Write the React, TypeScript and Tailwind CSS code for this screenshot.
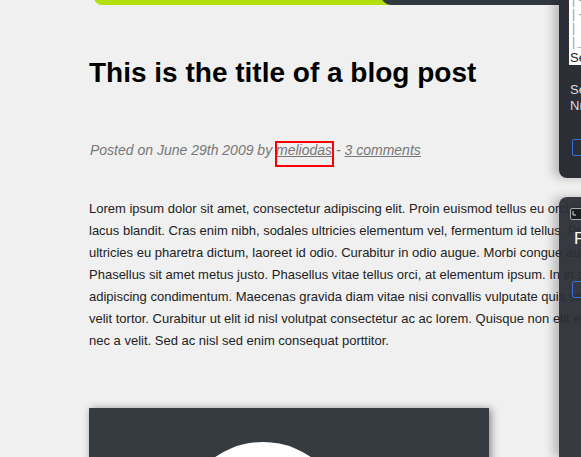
import React from "react";

const lines = [
  "Lorem ipsum dolor sit amet, consectetur adipiscing elit. Proin euismod tellus eu orci imperdiet nec rutrum",
  "lacus blandit. Cras enim nibh, sodales ultricies elementum vel, fermentum id tellus. Proin metus odio,",
  "ultricies eu pharetra dictum, laoreet id odio. Curabitur in odio augue. Morbi congue auctor interdum.",
  "Phasellus sit amet metus justo. Phasellus vitae tellus orci, at elementum ipsum. In in quam eget diam",
  "adipiscing condimentum. Maecenas gravida diam vitae nisi convallis vulputate quis sit amet nibh. Nullam ut",
  "velit tortor. Curabitur ut elit id nisl volutpat consectetur ac ac lorem. Quisque non elit et elit lacinia lobortis",
  "nec a velit. Sed ac nisl sed enim consequat porttitor.",
];

export default function App() {
  return (
    <div
      className="relative w-[581px] h-[457px] overflow-hidden bg-[#f0f0f0]"
      style={{ fontFamily: '"Liberation Sans", Arial, sans-serif' }}
    >
      {/* top nav bar (scrolled mostly out of view) */}
      <div className="flex -mt-[35px] h-[40px]">
        <div className="ml-[94px] w-[300px] bg-[#b3df0c] rounded-bl-[8px]" />
        <div className="-ml-[14px] flex-1 bg-[#323840] rounded-bl-[12px]" />
      </div>

      <div className="pl-[89px]">
        <h1 className="mt-[51px] text-[28px] leading-[34px] font-bold text-black whitespace-nowrap">
          This is the title of a blog post
        </h1>
        <p className="mt-[50px] text-[14px] leading-[20px] italic text-[#777] whitespace-nowrap pl-[1px]">
          Posted on June 29th 2009 by{" "}
          <a className="underline text-[#777]">meliodas</a> -{" "}
          <a className="underline text-[#777]">3 comments</a>
        </p>
        <div className="mt-[38px] text-[13px] leading-[22px] text-[#222]">
          {lines.map((l, i) => (
            <div key={i} className="whitespace-nowrap">
              {l}
            </div>
          ))}
        </div>
        <div className="mt-[56px] w-[400px] h-[120px] bg-[#353b41] shadow-[2px_1px_8px_rgba(0,0,0,0.45)] overflow-hidden">
          <div className="mt-[34px] ml-[90px] w-[168px] h-[168px] rounded-full bg-white" />
        </div>
      </div>

      {/* highlight box */}
      <div className="absolute left-[275px] top-[141px] w-[59px] h-[26px] border-2 border-[#ff0000]" />

      {/* upper overlay panel */}
      <div className="absolute left-[559px] top-0 w-[40px] h-[178px] rounded-bl-[8px] bg-[#2b2e35] shadow-[-6px_0_10px_rgba(0,0,0,0.22)] overflow-hidden">
        <div className="ml-[10px] h-[65px] bg-white overflow-hidden pl-[1px]">
          <div
            className="-mt-[6px] text-[12px] leading-[14px] text-[#999] whitespace-pre"
            style={{ fontFamily: '"Liberation Mono", monospace' }}
          >
            <div>|-</div>
            <div>|-</div>
            <div>|</div>
            <div>|_</div>
          </div>
          <div className="text-[13px] leading-[16px] text-[#222] whitespace-nowrap">Se</div>
        </div>
        <div className="pt-[17px] pl-[11px] text-[13px] leading-[16px] text-[#ddd] whitespace-nowrap">
          <div>Se</div>
          <div>Nm</div>
        </div>
        <div className="mt-[25px] ml-[13px] w-[30px] h-[17px] border border-[#3a6fd8] rounded-[2px]" />
      </div>

      {/* lower overlay panel */}
      <div className="absolute left-[559px] top-[197px] bottom-0 w-[40px] rounded-tl-[8px] bg-[#2b2e35]/95 shadow-[-6px_0_10px_rgba(0,0,0,0.22)] overflow-hidden">
        <div className="mt-[11px] ml-[11px] w-[16px] h-[12px] border border-[#aaa] rounded-[2px] bg-[#1c1e22] relative">
          <svg className="absolute left-[1px] top-[1px]" width="8" height="8" viewBox="0 0 8 8">
            <path d="M1 1 L1 5 L4 5" stroke="#ddd" strokeWidth="1" fill="none" />
          </svg>
        </div>
        <div className="mt-[9px] pl-[15px] text-[17px] leading-[20px] text-white whitespace-nowrap">F</div>
        <div className="mt-[32px] ml-[13px] w-[30px] h-[17px] border border-[#3a6fd8] rounded-[2px]" />
      </div>
    </div>
  );
}
